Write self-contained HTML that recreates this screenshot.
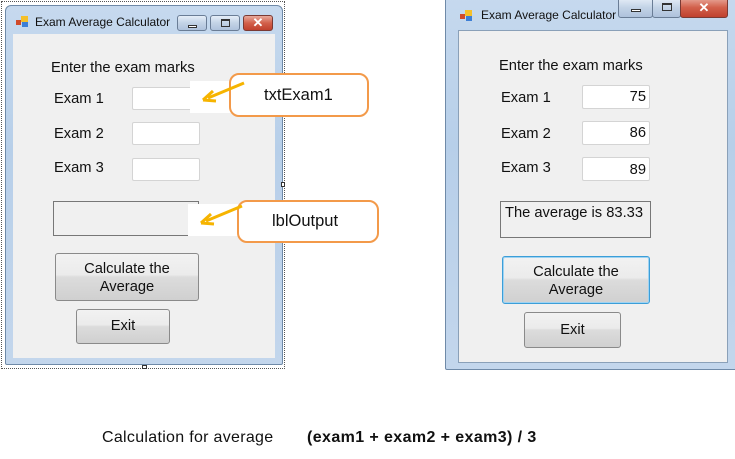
<!DOCTYPE html>
<html><head><style>
*{box-sizing:border-box;margin:0;padding:0}
body{width:735px;height:459px;background:#fff;position:relative;overflow:hidden;font-family:"Liberation Sans",sans-serif;color:#111}
.a{position:absolute}
.t{font-size:14.7px;white-space:nowrap}
.tb{background:#fff;border:1px solid #d4d4d4;border-radius:2px}
.btn{border:1px solid #8a8a8a;border-radius:3px;background:linear-gradient(#f2f2f2 0,#ebebeb 45%,#dcdcdc 50%,#d0d0d0 100%);text-align:center;font-size:14.7px;line-height:18px}
.frame{background:linear-gradient(#c6d9ee,#b7cfe9 40%,#c3d6ec);border:1px solid #6f8aa8;border-radius:6px 6px 2px 2px}
.client{background:#f0f0f0}
.wb{border:1px solid #6a7d96;border-radius:3px;background:linear-gradient(#e6eef8,#c3d3e6 50%,#aec2dc)}
.cl{border:1px solid #7a3a34;border-radius:3px;background:linear-gradient(#e8a99c,#d2604b 50%,#c0412e)}
.co{border:2px solid #f39a4a;border-radius:10px;background:#fff;font-size:16.5px}
</style></head><body>
<!-- left -->
<div class="a" style="left:1px;top:1px;width:284px;height:368px;border:1px dotted #555"></div>
<div class="a frame" style="left:5px;top:5px;width:278px;height:360px"></div>
<div class="a client" style="left:13px;top:34px;width:262px;height:324px"></div>
<svg class="a" style="left:16px;top:15px" width="14" height="13"><rect x="0" y="5" width="5" height="5" fill="#d04a2a"/><rect x="5" y="1" width="7" height="6" fill="#f5c02a"/><rect x="6" y="7" width="6" height="5" fill="#3d7fd6"/></svg>
<div class="a t" style="left:35px;top:15px;font-size:12px">Exam Average Calculator</div>
<div class="a wb" style="left:177px;top:15px;width:30px;height:16px"><div class="a" style="left:10px;top:9px;width:9px;height:3px;border:1px solid #333;background:#fff"></div></div>
<div class="a wb" style="left:210px;top:15px;width:30px;height:16px"><div class="a" style="left:10px;top:3px;width:9px;height:8px;border:1px solid #333;border-top-width:2px"></div></div>
<div class="a cl" style="left:243px;top:15px;width:30px;height:16px;color:#fff;font-weight:bold;font-size:13px;text-align:center;line-height:14px">✕</div>
<div class="a t" style="left:51px;top:60px">Enter the exam marks</div>
<div class="a t" style="left:54px;top:91px">Exam 1</div>
<div class="a t" style="left:54px;top:126px">Exam 2</div>
<div class="a t" style="left:54px;top:160px">Exam 3</div>
<div class="a tb" style="left:132px;top:87px;width:68px;height:23px"></div>
<div class="a tb" style="left:132px;top:122px;width:68px;height:23px"></div>
<div class="a tb" style="left:132px;top:158px;width:68px;height:23px"></div>
<div class="a" style="left:53px;top:201px;width:146px;height:35px;border:1px solid #777"></div>
<div class="a btn" style="left:55px;top:253px;width:144px;height:48px;padding-top:6px">Calculate the<br>Average</div>
<div class="a btn" style="left:76px;top:309px;width:94px;height:35px;line-height:33px">Exit</div>
<div class="a" style="left:190px;top:81px;width:50px;height:32px;background:#fff"></div>
<div class="a co" style="left:229px;top:73px;width:140px;height:44px;line-height:40px;padding-left:33px">txtExam1</div>
<div class="a" style="left:188px;top:204px;width:52px;height:32px;background:#fff"></div>
<div class="a co" style="left:237px;top:200px;width:142px;height:43px;line-height:39px;padding-left:33px">lblOutput</div>
<svg class="a" style="left:200px;top:80px" width="50" height="25"><path d="M44 3 L8 18" stroke="#f6b400" stroke-width="3"/><path d="M3 20 L13 11 M3 20 L16 21" stroke="#f6b400" stroke-width="3"/></svg>
<svg class="a" style="left:198px;top:204px" width="50" height="25"><path d="M44 2 L8 17" stroke="#f6b400" stroke-width="3"/><path d="M3 19 L13 10 M3 19 L16 20" stroke="#f6b400" stroke-width="3"/></svg>
<div class="a" style="left:281px;top:182px;width:4px;height:5px;border:1px solid #333;background:#fff"></div>
<div class="a" style="left:142px;top:365px;width:5px;height:4px;border:1px solid #333;background:#fff"></div>
<!-- right -->
<div class="a frame" style="left:445px;top:-6px;width:292px;height:376px"></div>
<div class="a client" style="left:458px;top:30px;width:270px;height:333px;border:1px solid #8aa0b8"></div>
<svg class="a" style="left:460px;top:9px" width="14" height="13"><rect x="0" y="5" width="5" height="5" fill="#d04a2a"/><rect x="5" y="1" width="7" height="6" fill="#f5c02a"/><rect x="6" y="7" width="6" height="5" fill="#3d7fd6"/></svg>
<div class="a t" style="left:481px;top:8px;font-size:12px">Exam Average Calculator</div>
<div class="a wb" style="left:618px;top:-3px;width:35px;height:21px"><div class="a" style="left:12px;top:11px;width:10px;height:3px;border:1px solid #333;background:#fff"></div></div>
<div class="a wb" style="left:652px;top:-3px;width:29px;height:21px"><div class="a" style="left:9px;top:5px;width:10px;height:8px;border:1px solid #333;border-top-width:2px"></div></div>
<div class="a cl" style="left:680px;top:-3px;width:48px;height:21px;color:#fff;font-weight:bold;font-size:13px;text-align:center;line-height:20px">✕</div>
<div class="a t" style="left:499px;top:58px">Enter the exam marks</div>
<div class="a t" style="left:501px;top:90px">Exam 1</div>
<div class="a t" style="left:501px;top:126px">Exam 2</div>
<div class="a t" style="left:501px;top:160px">Exam 3</div>
<div class="a tb t" style="left:582px;top:85px;width:68px;height:24px;text-align:right;padding:3px 3px 0 0">75</div>
<div class="a tb t" style="left:582px;top:121px;width:68px;height:24px;text-align:right;padding:3px 3px 0 0">86</div>
<div class="a tb t" style="left:582px;top:157px;width:68px;height:24px;text-align:right;padding:4px 3px 0 0">89</div>
<div class="a t" style="left:500px;top:201px;width:151px;height:37px;border:1px solid #777;padding:3px 0 0 4px">The average is 83.33</div>
<div class="a btn" style="left:502px;top:256px;width:148px;height:48px;padding-top:6px;border-color:#3c9ed8;box-shadow:inset 0 0 0 1px #9fd3f2">Calculate the<br>Average</div>
<div class="a btn" style="left:524px;top:312px;width:97px;height:36px;line-height:34px">Exit</div>
<!-- bottom -->
<div class="a" style="left:102px;top:429px;font-size:16px;letter-spacing:0.3px;color:#111">Calculation for average</div>
<div class="a" style="left:307px;top:429px;font-size:16px;letter-spacing:0.4px;font-weight:bold;color:#111">(exam1 + exam2 + exam3) / 3</div>
</body></html>
